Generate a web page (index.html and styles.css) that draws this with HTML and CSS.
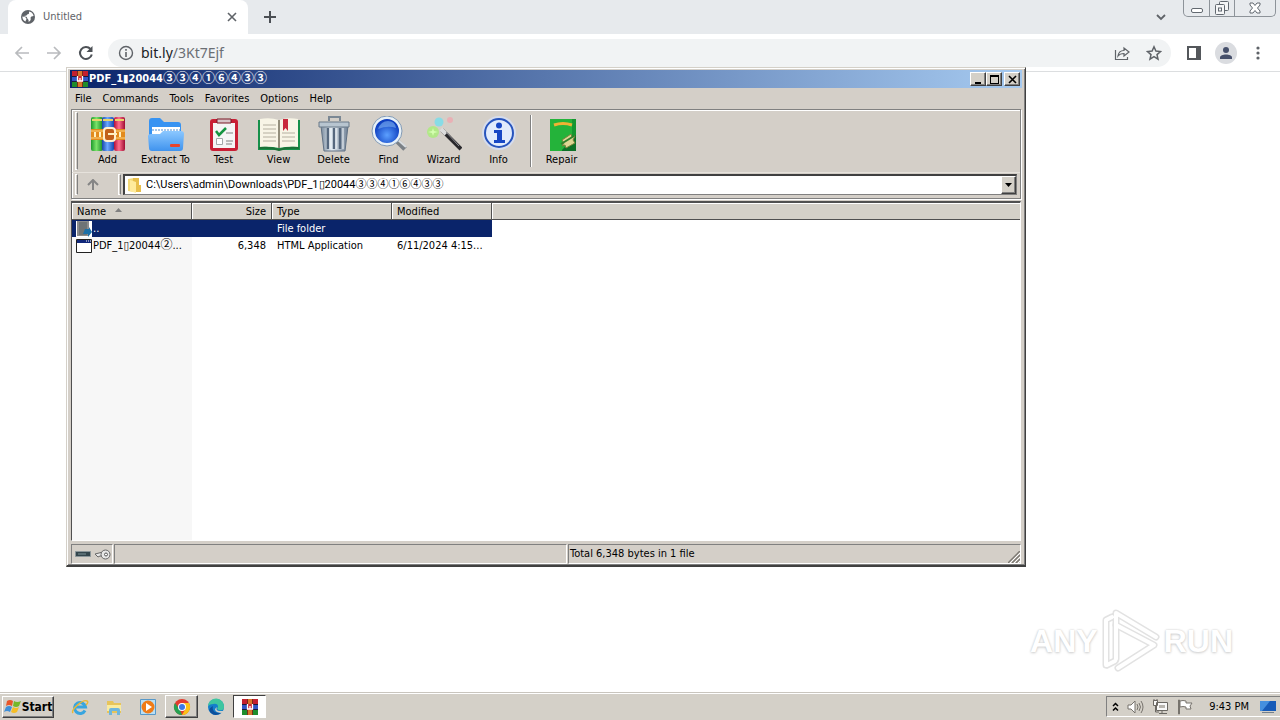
FILE: index.html
```html
<!DOCTYPE html>
<html lang="en">
<head>
<meta charset="utf-8">
<title>Untitled</title>
<link rel="stylesheet" href="styles.css">
</head>
<body>
<svg class="defs" aria-hidden="true">
  <defs>
    <linearGradient id="gGreen" x2="1"><stop offset="0" stop-color="#1d9a2b"/><stop offset=".45" stop-color="#7be36a"/><stop offset="1" stop-color="#118a24"/></linearGradient>
    <linearGradient id="gBlue" x2="1"><stop offset="0" stop-color="#1746a8"/><stop offset=".45" stop-color="#6ba8ff"/><stop offset="1" stop-color="#1746b0"/></linearGradient>
    <linearGradient id="gRed" x2="1"><stop offset="0" stop-color="#b5103a"/><stop offset=".45" stop-color="#ff6f8d"/><stop offset="1" stop-color="#a00d33"/></linearGradient>
    <linearGradient id="gFold" x2="0" y2="1"><stop offset="0" stop-color="#8cc8ff"/><stop offset="1" stop-color="#3f93ee"/></linearGradient>
    <linearGradient id="gSteel" x2="1"><stop offset="0" stop-color="#7b8c9e"/><stop offset=".4" stop-color="#e6eef5"/><stop offset="1" stop-color="#708195"/></linearGradient>
    <radialGradient id="gLens" cx=".5" cy=".65"><stop offset="0" stop-color="#5ca0ff"/><stop offset="1" stop-color="#0e3fc0"/></radialGradient>
    <symbol id="rar" viewBox="0 0 16 16">
      <path fill="#c3202f" d="M0 0h16v5H0z"/><path fill="#3156c4" d="M0 5.500h16v5H0z"/><path fill="#1f8c2c" d="M0 11h16v5H0z"/>
      <path stroke="#1a1a3a" d="M0 5.500h16M0 10.500h16"/><path fill="#d9762b" d="M5 0h6v16H5z"/>
      <path fill="#7a2b18" d="M5 0h1v16H5zm5 0h1v16h-1z"/><path fill="#d02a35" d="M5 5h6v6H5z"/><path stroke="#fff" stroke-width="1.300" fill="none" d="M5.500 5v5h5V5M8 7v3"/>
    </symbol>
  </defs>
</svg>

<div class="desktop">
  <header class="browser">
    <div class="tabstrip">
      <div class="tab">
        <svg width="16" height="16" viewBox="0 0 16 16"><circle cx="8" cy="8" r="7" fill="#5f6368"/><path fill="#fff" d="M2.400 7.500c2 .2 3.600.8 4 2 .4 1.100-.7 1.500-.8 3C3.500 11.600 2.200 9.800 2.400 7.500zM9 2.400c2.200.2 4.200 2 4.600 4.400-.9.900-1.900.2-2.700 1.300-.9 1.100.5 2-.6 3.500-.4.600-1 1-1.800 1.500.4-1.300 0-2.200-.8-3-1-1-.2-1.800-1.300-2.300-1-.4-1.600.2-2.200-.8 1-.4 2.300.1 2.600-.9.300-1.200 1.700-.6 2.200-1.600z"/></svg>
        <span>Untitled</span>
        <button class="plain" aria-label="Close tab"><svg width="10" height="10" viewBox="0 0 10 10"><path d="M1 1l8 8M9 1L1 9" stroke="#5f6368" stroke-width="1.600"/></svg></button>
      </div>
      <button class="plain newtab" aria-label="New tab"><svg width="12" height="12" viewBox="0 0 12 12"><path d="M6 0v12M0 6h12" stroke="#4b4f54" stroke-width="2"/></svg></button>
      <button class="plain tabsearch" aria-label="Search tabs"><svg width="10" height="7" viewBox="0 0 10 7"><path d="M1 1l4 4 4-4" stroke="#5f6368" stroke-width="1.800" fill="none"/></svg></button>
      <div class="caption">
        <button aria-label="Minimize"><svg width="14" height="14" viewBox="0 0 14 14"><rect x="1.500" y="7.500" width="11" height="4" rx="1.500" fill="#fff" stroke="#626970"/></svg></button>
        <button aria-label="Restore"><svg width="14" height="14" viewBox="0 0 14 14" fill="#f5f6f7" stroke="#626970"><rect x="4.500" y=".5" width="9" height="9" rx="1"/><rect x=".5" y="3.500" width="9" height="10" rx="1"/><rect x="3.500" y="7" width="3" height="3"/></svg></button>
        <button class="wide" aria-label="Close"><svg width="12" height="12" viewBox="0 0 12 12"><path d="M1 1h3l2 2.500L8 1h3v2L8.500 6 11 9v2H8L6 8.500 4 11H1V9l2.500-3L1 3z" fill="#fff" stroke="#626970"/></svg></button>
      </div>
    </div>
    <div class="navbar">
      <button class="plain" aria-label="Back"><svg width="16" height="14" viewBox="0 0 16 14"><path d="M15 7H2M8 1L2 7l6 6" stroke="#b9bbbe" stroke-width="1.700" fill="none"/></svg></button>
      <button class="plain" aria-label="Forward"><svg width="16" height="14" viewBox="0 0 16 14"><path d="M1 7h13M8 1l6 6-6 6" stroke="#b9bbbe" stroke-width="1.700" fill="none"/></svg></button>
      <button class="plain" aria-label="Reload"><svg width="16" height="16" viewBox="0 0 16 16"><path d="M13.800 9.500A6 6 0 1 1 12.500 4" stroke="#4d5156" stroke-width="2" fill="none"/><path d="M14.500 1v6h-6z" fill="#4d5156"/></svg></button>
      <div class="omnibox">
        <svg width="16" height="16" viewBox="0 0 16 16"><circle cx="8" cy="8" r="6.500" fill="none" stroke="#5f6368" stroke-width="1.400"/><path d="M8 7v5M8 4v1.700" stroke="#5f6368" stroke-width="1.600"/></svg>
        <a class="url" href="#">bit.ly<span>/3Kt7Ejf</span></a>
        <button class="plain" aria-label="Share"><svg width="16" height="16" viewBox="0 0 16 16" fill="none" stroke="#5f6368" stroke-width="1.200"><path d="M1.500 5v9.500h12V12"/><path d="M4 11c.5-4 3-5.500 6-5.500V3l5 4-5 4V8.500C7.500 8.500 5.500 9 4 11z"/></svg></button>
        <button class="plain" aria-label="Bookmark"><svg width="16" height="16" viewBox="0 0 16 16"><path d="M8 1.800l1.900 4.300 4.600.4-3.500 3.100 1 4.500-4-2.400-4 2.400 1-4.500L1.500 6.500l4.600-.4z" fill="none" stroke="#5f6368" stroke-width="1.500"/></svg></button>
      </div>
      <button class="plain" aria-label="Side panel"><svg width="14" height="14" viewBox="0 0 14 14"><path d="M0 0h14v14H0zM2 2v10h7V2z" fill="#54575b" fill-rule="evenodd"/></svg></button>
      <button class="plain profile" aria-label="Profile"><svg width="22" height="22" viewBox="0 0 22 22"><circle cx="11" cy="11" r="11" fill="#dadce0"/><circle cx="11" cy="8" r="3" fill="#46506b"/><path d="M5 17v-1.500c0-4 12-4 12 0V17z" fill="#46506b"/></svg></button>
      <button class="plain" aria-label="Menu"><svg width="4" height="14" viewBox="0 0 4 14" fill="#5f6368"><circle cx="2" cy="2" r="1.600"/><circle cx="2" cy="7" r="1.600"/><circle cx="2" cy="12" r="1.600"/></svg></button>
    </div>
  </header>

  <main class="page">
    <div class="watermark">
      <span>ANY</span>
      <svg width="58" height="66" viewBox="0 0 58 66" fill="none" stroke-linejoin="round" stroke-linecap="round"><g stroke="#e2e2e2" stroke-width="7"><path d="M4 57V12l6-3M14 51V5l40 24"/><path d="M14 17l38 20-36 23M5 57l8-4"/></g><g stroke="#fff" stroke-width="4"><path d="M4 57V12l6-3M14 51V5l40 24"/><path d="M14 17l38 20-36 23M5 57l8-4"/></g></svg>
      <span>RUN</span>
    </div>
  </main>

  <section class="window" aria-label="WinRAR">
    <div class="titlebar">
      <svg width="16" height="16"><use href="#rar"/></svg>
      <h1>PDF_1▮20044<span class="circled">③③④①⑥④③③</span></h1>
      <button class="btn3d" aria-label="Minimize"><svg width="9" height="9"><path d="M1 7h6v2H1z"/></svg></button>
      <button class="btn3d" aria-label="Maximize"><svg width="9" height="9"><path fill-rule="evenodd" d="M0 0h9v9H0zM1 2v6h7V2z"/></svg></button>
      <button class="btn3d close" aria-label="Close"><svg width="9" height="9" viewBox="0 0 9 9"><path d="M1 1l7 7M8 1L1 8" stroke="#000" stroke-width="1.600"/></svg></button>
    </div>
    <nav class="menu">
      <button>File</button><button>Commands</button><button>Tools</button><button>Favorites</button><button>Options</button><button>Help</button>
    </nav>
    <div class="bars">
      <div class="tools">
        <i class="grip"></i>
        <button><svg width="36" height="36" viewBox="0 0 36 36"><rect x="1" y="1" width="12" height="34" rx="2" fill="url(#gGreen)"/><rect x="12" y="1" width="12" height="34" rx="2" fill="url(#gBlue)"/><rect x="24" y="1" width="11" height="34" rx="2" fill="url(#gRed)"/><path d="M2 4h10M13 4h10M25 4h9" stroke="#e9d36b" stroke-width="2"/><path d="M1 13h34v11H1z" fill="#e28a1c"/><path d="M1 15h34M1 22h34" stroke="#ffd27a"/><rect x="14" y="12" width="11" height="13" rx="3" fill="#c2601a" stroke="#fff0d0" stroke-width="2"/><path d="M18 18h9M5 16v5M10 16v5M30 16v5" stroke="#fff0c0" stroke-width="2"/></svg>Add</button>
        <button class="broad"><svg width="36" height="36" viewBox="0 0 36 36"><path d="M1 5q0-3 3-3h8l4 4h14q3 0 3 3v16H1z" fill="#3793f2"/><path d="M4 11h28v10H4z" fill="#fff"/><path d="M4 14h28" stroke="#a4c6ea" stroke-width="2" stroke-dasharray="2 1"/><path d="M0 20q0-2 3-2h9l3-3h18q3 0 3 3l-1 14q0 3-3 3H4q-3 0-3-3z" fill="url(#gFold)"/><rect x="22" y="28" width="10" height="3" rx="1" fill="#e8442c"/></svg>Extract To</button>
        <button><svg width="36" height="36" viewBox="0 0 36 36"><rect x="4" y="3" width="28" height="32" rx="3" fill="#c91f35"/><path d="M7 7h22v25H7z" fill="#f5f5f5"/><path d="M11 3h14v4H11z" fill="#d8c4c8" stroke="#7a1724"/><path d="M10 15l3 4 7-7" stroke="#159441" stroke-width="2.500" fill="none"/><path d="M20 17h7M20 25h7M20 28h6" stroke="#bbb" stroke-width="2"/><path d="M10.500 22.500h6v6h-6z" fill="#fff" stroke="#a2a8aa"/></svg>Test</button>
        <button><svg width="42" height="36" viewBox="0 0 42 36"><path d="M0 4h42v30H0z" fill="#16904a"/><path d="M2 3q10-2 19 1 9-3 19-1v28q-10-1-19 1-9-2-19-1z" fill="#f8f5e6"/><path d="M21 4v28" stroke="#938e7b" stroke-width="2"/><path d="M5 9h13M5 13h13M5 17h13M5 21h13M5 25h13M24 17h13M24 21h13M24 25h13" stroke="#b5b0a0"/><path d="M25 3h5v12l-2.500-3-2.500 3z" fill="#c8293c"/><path d="M1 32q12-1 20 2 8-3 20-2" stroke="#1b7137" stroke-width="2" fill="none"/></svg>View</button>
        <button><svg width="36" height="36" viewBox="0 0 36 36"><path d="M5 10h27l-3 25H8z" fill="url(#gSteel)" stroke="#607184"/><path d="M12 12v21M18 12v21M24 12v21" stroke="#56687e" stroke-width="2.500"/><path d="M14 12v21M20 12v21M27 12v21" stroke="#f3f7fa"/><path d="M3 6h30v5H3z" fill="#b8c5d0" stroke="#697988"/><path d="M13 5V1h11v4" fill="none" stroke="#7b8894" stroke-width="2"/></svg>Delete</button>
        <button><svg width="36" height="36" viewBox="0 0 36 36"><path d="M25 24l9 9" stroke="#7a8086" stroke-width="5"/><path d="M26 23l9 8" stroke="#d8dcdf" stroke-width="2"/><circle cx="16" cy="15" r="13.500" fill="url(#gLens)" stroke="#e8f1f8" stroke-width="3"/><circle cx="16" cy="15" r="15" fill="none" stroke="#829ab5"/><path d="M7 13q3-8 10-8t8 7q-8-3-18 1z" fill="#6fa2ec" opacity=".7"/></svg>Find</button>
        <button><svg width="36" height="36" viewBox="0 0 36 36"><circle cx="7" cy="16" r="6" fill="#a9ee78" opacity=".8"/><circle cx="13" cy="6" r="4.500" fill="#74dfee" opacity=".8"/><circle cx="24" cy="4" r="3" fill="#f2a3ac" opacity=".7"/><path d="M7 12l1 3 4 1-4 1-1 3-1-3-4-1 4-1z" fill="#d5ffb0"/><path d="M16 14l19 19" stroke="#29282c" stroke-width="4"/><path d="M15 13l5 5" stroke="#dcdcdc" stroke-width="4"/><path d="M20 16l13 14" stroke="#909096"/></svg>Wizard</button>
        <button><svg width="36" height="36" viewBox="0 0 36 36"><circle cx="18" cy="17" r="17" fill="#d5dced"/><circle cx="18" cy="17" r="14" fill="#e1ebfc" stroke="#2754bd" stroke-width="2"/><circle cx="18" cy="9.500" r="3" fill="#1747c5"/><path d="M13 14h8v10h3v3H13v-3h3v-7h-3z" fill="#1747c5"/></svg>Info</button>
        <i class="sep"></i>
        <button><svg width="36" height="36" viewBox="0 0 36 36"><path d="M6 3h26v32H6z" fill="#159630"/><path d="M6 3h22v32H6z" fill="#24b33a"/><path d="M10 9q9-3 18 0" stroke="#f0b233" stroke-width="3" fill="none"/><path d="M18 34l14-15v16H18z" fill="#0d7228"/><path d="M18 24l9-6 1 3 3-1-2 4 2 3-9 5-1-3-3 1 2-3z" fill="#dfd694" stroke="#77843a"/><path d="M17 28l13-8" stroke="#31802c" stroke-width="2"/></svg>Repair</button>
      </div>
      <div class="address">
        <i class="grip"></i>
        <button class="plain up" aria-label="Up one level"><svg width="12" height="11" viewBox="0 0 12 11"><path d="M6 11V2M1 6l5-5 5 5" stroke="#858585" stroke-width="2" fill="none"/></svg></button>
        <i class="grip"></i>
        <div class="combo">
          <svg width="16" height="16" viewBox="0 0 16 16"><path d="M2 2l6-1v14l-6-1z" fill="#f4da79"/><path d="M7 1h6v7h2v7H7z" fill="#e8bf4c"/><path d="M4 3l6 2v11l-6-2z" fill="#ffeb9c"/></svg>
          <input type="text" aria-label="Path" value="C:\Users\admin\Downloads\PDF_1▯20044③③④①⑥④③③">
          <button class="btn3d" aria-label="Show history"><svg width="7" height="4"><path d="M0 0h7L3.500 4z"/></svg></button>
        </div>
      </div>
    </div>
    <div class="list">
      <table>
        <colgroup><col class="c-name"><col class="c-size"><col class="c-type"><col class="c-mod"><col></colgroup>
        <thead><tr><th>Name <svg class="sort" width="7" height="4"><path d="M0 4L3.500 0 7 4z" fill="#808080"/></svg></th><th class="num">Size</th><th>Type</th><th>Modified</th><th class="rest"></th></tr></thead>
        <tbody>
          <tr class="selected"><td><div class="file"><svg width="16" height="16" viewBox="0 0 16 16"><path d="M0 0h16v16H0z" fill="#fff"/><path d="M1 0h12v15H1z" fill="#8b8c8c"/><path d="M3 1h8v13H3z" fill="#6e7476"/><path d="M9 8h4V6l3 5-4 5v-3H7z" fill="#1b70a8"/></svg><span>..</span></div></td><td></td><td>File folder</td><td></td><td class="rest"></td></tr>
          <tr><td><div class="file"><svg width="16" height="14" viewBox="0 0 16 14"><path d="M.5.500h15v13H.5z" fill="#fff" stroke="#222"/><path d="M1 1h14v3H1z" fill="#11277a"/><path d="M10 2h1M12 2h1M14 2h1" stroke="#fff"/></svg><span>PDF_1▯20044<span class="circled">②</span>...</span></div></td><td class="num">6,348</td><td>HTML Application</td><td>6/11/2024 4:15...</td><td class="rest"></td></tr>
        </tbody>
      </table>
    </div>
    <footer class="status">
      <div class="pane icons"><svg width="16" height="8" viewBox="0 0 16 8"><path d="M.5 1.500h15v5H.5z" fill="#34464d" stroke="#8b969a"/><path d="M3 4h8" stroke="#7c9298"/></svg><svg width="17" height="11" viewBox="0 0 17 11"><path d="M1 5l8-2v4H6L4 8z" fill="#e7e7e7" stroke="#666"/><circle cx="11.500" cy="5.500" r="4.500" fill="#e7e7e7" stroke="#666"/><circle cx="12" cy="5.500" r="1.500" fill="#fff" stroke="#555"/></svg></div>
      <div class="pane"></div>
      <div class="pane">Total 6,348 bytes in 1 file<svg class="resize" width="12" height="12" viewBox="0 0 12 12"><path d="M0 12L12 0M4 12l8-8M8 12l4-4" stroke="#7d7973" stroke-width="1.500"/><path d="M2 12L12 2M6 12l6-6M10 12l2-2" stroke="#fff"/></svg></div>
    </footer>
  </section>

  <footer class="taskbar">
    <button class="btn3d start"><svg width="18" height="18" viewBox="0 0 18 18"><path d="M3 3q3-2 6 0L8 8Q5 6 2 8z" fill="#e8562a"/><path d="M10 3q3 2 7 0l-2 5q-3 2-6 0z" fill="#75b82a"/><path d="M2 9q3-2 6 0l-2 5q-3-2-6 0z" fill="#3f8fd8"/><path d="M9 9q3 2 6 0l-2 5q-3 2-6 0z" fill="#f6be26"/></svg>Start</button>
    <div class="apps">
      <button class="plain" aria-label="Internet Explorer"><svg width="18" height="18" viewBox="0 0 18 18" fill="none"><path d="M14 12.500A5.500 5.500 0 1 1 14.500 9H5" stroke="#38a5df" stroke-width="3"/><path d="M2 15C-1 12 12 1 16 3q2 1-1 4" stroke="#e9b836" stroke-width="1.400"/></svg></button>
      <button class="plain" aria-label="Explorer"><svg width="18" height="18" viewBox="0 0 18 18"><path d="M2 3h6l1 2h7v10H2z" fill="#e7c45a"/><path d="M2 7h14v6H2z" fill="#faeb9e"/><path d="M4 17v-5q0-2 2-2h7q2 0 2 2v5h-3v-4H7v4z" fill="#6fb6dd"/></svg></button>
      <button class="plain" aria-label="Media Player"><svg width="18" height="18" viewBox="0 0 18 18"><path d="M1.500 1.500h15v15h-15z" fill="#b9dff5" stroke="#5798c8"/><circle cx="9" cy="9" r="6.500" fill="#f07c18"/><path d="M7 5l6 4-6 4z" fill="#fff"/></svg></button>
      <button class="btn3d task" aria-label="Chrome"><svg width="18" height="18" viewBox="0 0 18 18"><circle cx="9" cy="9" r="8" fill="#e33b2e"/><path d="M2 5l5 7 2 5A8 8 0 0 1 2 5z" fill="#26a152"/><path d="M9 5h7a8 8 0 0 1-7 12l4-7z" fill="#fbc116"/><circle cx="9" cy="9" r="4" fill="#fff"/><circle cx="9" cy="9" r="3" fill="#3b78e7"/></svg></button>
      <button class="plain" aria-label="Edge"><svg width="18" height="18" viewBox="0 0 18 18"><circle cx="9" cy="9" r="8" fill="#157fcb"/><path d="M1 8a8 8 0 0 1 16 1q0 4-5 3-3-1-1-3 0-4-5-3-3 0-5 2z" fill="#3ec6a0"/><path d="M6 8q-2 7 8 7-6 4-10 0T6 8z" fill="#0c4f9c"/><path d="M10 9q-2 4 3 4h4l-1 2q-8 0-8-4z" fill="#d4d0c8"/></svg></button>
      <button class="btn3d task active" aria-label="WinRAR"><svg width="16" height="16"><use href="#rar"/></svg></button>
    </div>
    <div class="tray">
      <svg width="7" height="10" viewBox="0 0 7 10" fill="none" stroke="#000" stroke-width="1.500"><path d="M1 4l2.500-2.500L6 4M1 8.500L3.500 6 6 8.500"/></svg>
      <svg width="17" height="14" viewBox="0 0 17 14" fill="none" stroke="#77736d"><path d="M1 5h3l4-4v12L4 9H1z" fill="#fff"/><path d="M10 4q2 3 0 6M12 3q3 4 0 8M14 1q4 6 0 12"/></svg>
      <svg width="17" height="16" viewBox="0 0 17 16" stroke="#6a6762" fill="#f8f8f8"><path d="M4.500 3.500h11v8h-11zM7 14.500h8M10 12v2M1.500 1.500h4v5h-4z"/><path d="M7 6h6v3H7z" fill="#b8b5af" stroke="none"/><path d="M3.500 7v6H7M2 0v2M5 0v2" fill="none"/></svg>
      <svg width="16" height="16" viewBox="0 0 16 16" stroke="#77736d" fill="#fff"><path d="M2.500 1v14h-1V1zM3 2q3-1 6 0v2h6l-2 3 1 3H9V8Q6 7 3 8z"/></svg>
      <time>9:43 PM</time>
      <svg width="16" height="14" viewBox="0 0 16 14"><path d="M0 1h16v10H0z" fill="#175bb8"/><path d="M0 1h10L2 11H0z" fill="#4590df"/><path d="M2 12h12v1H2z" fill="#73808d"/></svg>
    </div>
  </footer>
</div>
</body>
</html>
```
FILE: styles.css
```css
* { box-sizing: border-box; }
body { margin: 0; font: 11px/14px "DejaVu Sans Condensed", "DejaVu Sans", sans-serif; color: #000; }
button, input { font: inherit; color: inherit; margin: 0; }
button { padding: 0; border: 0; background: none; }
svg { display: block; flex: none; }
.defs { position: absolute; width: 0; height: 0; }
.plain { display: flex; align-items: center; justify-content: center; }
.circled { font-family: "Noto Sans CJK SC", sans-serif; font-size: 12px; line-height: 12px; }

.desktop { position: relative; display: flex; flex-direction: column; min-height: 100vh; background: #fff; overflow: hidden; }

/* browser chrome */
.browser { border-bottom: 1px solid #dcdee0; }
.tabstrip { display: flex; align-items: center; height: 34px; padding-left: 8px; background: #e7eaed; }
.tab { display: flex; align-items: center; gap: 7px; width: 240px; height: 34px; padding: 0 11px 0 12px; border-radius: 8px 8px 0 0; background: #fff; color: #5f6368; }
.tab span { flex: 1; }
.newtab { width: 44px; height: 34px; }
.tabsearch { width: 30px; height: 34px; margin-left: auto; margin-right: 7px; }
.caption { display: flex; align-self: flex-start; height: 17px; margin-right: 4px; border: 1px solid #8d9399; border-top: 0; border-radius: 0 0 5px 5px; }
.caption button { display: flex; align-items: center; justify-content: center; width: 25px; }
.caption button + button { border-left: 1px solid #8d9399; }
.caption .wide { width: 41px; }
.navbar { display: flex; align-items: center; height: 37px; padding: 0 20px 0 14px; gap: 16px; }
.omnibox { display: flex; align-items: center; flex: 1; height: 28px; gap: 16px; padding: 0 9px 0 10px; margin-left: -2px; border-radius: 14px; background: #f1f3f4; }
.url { flex: 1; margin-left: -9px; font: 14px/20px "Noto Sans", sans-serif; color: #202124; text-decoration: none; }
.url span { color: #6b6f74; }
.profile { margin: 0 3px 0 -2px; }

.page { display: flex; flex: 1; align-items: flex-end; justify-content: flex-end; padding: 0 47px 18px 0; }
.watermark { display: flex; align-items: center; gap: 4px; font: 700 32px/66px "Liberation Sans", sans-serif; color: #fff; text-shadow: 0 0 2px #c8c8c8, 0 1px 3px #d4d4d4; }

/* archive window */
.window { position: absolute; left: 66px; top: 67px; display: flex; flex-direction: column; width: 960px; height: 500px; padding: 2px 3px 1px 3px; border: 1px solid #d4d0c8; border-right-color: #404040; border-bottom: 2px solid #404040; background: #d4cfc8; box-shadow: inset 1px 1px #fff, inset -1px -1px #808080; }
.titlebar { display: flex; align-items: center; height: 18px; padding: 0 2px; background: linear-gradient(90deg, #0a246a, #a6caf0); color: #fff; }
.titlebar h1 { flex: 1; margin: 0 0 0 1px; font-size: 11px; line-height: 18px; font-weight: 700; }
.titlebar .circled { font-size: 13px; }
.btn3d { display: flex; align-items: center; justify-content: center; border: 1px solid #fff; border-right-color: #404040; border-bottom-color: #404040; background: #d4d0c8; box-shadow: inset -1px -1px #808080; }
.titlebar .btn3d { width: 16px; height: 14px; }
.titlebar .close { margin-left: 2px; }
.menu { display: flex; height: 21px; gap: 11px; padding-left: 5px; align-items: center; }
.bars { margin: 0 1px; border: 1px solid #808080; box-shadow: inset 1px 1px #fff, 1px 1px #fff; }
.tools { display: flex; align-items: center; height: 62px; padding: 2px 3px; }
.grip { width: 3px; align-self: stretch; margin-right: 2px; border: 1px solid #fff; border-right-color: #808080; }
.tools button { display: flex; flex-direction: column; align-items: center; width: 55px; gap: 1px; }
.tools .broad { width: 61px; }
.sep { width: 2px; height: 52px; margin: 0 2px 0 4px; border-left: 1px solid #808080; border-right: 1px solid #fff; }
.address { display: flex; align-items: stretch; height: 26px; padding: 1px 3px 3px 3px; border-top: 1px solid #e6e2dc; }
.up { width: 26px; margin-right: 12px; }
.combo { display: flex; flex: 1; align-items: center; padding-left: 1px; border: 1px solid #808080; border-top: 2px solid #404040; border-left: 2px solid #404040; background: #fff; }
.combo input { flex: 1; min-width: 0; padding: 0 0 0 4px; border: 0; background: none; outline: 0; font: 11px/14px Roboto, "Noto Sans CJK SC", sans-serif; }
.combo .btn3d { width: 15px; align-self: stretch; }
.list { flex: 1; margin: 2px 1px 0 1px; border: 1px solid #fff; border-top: 2px solid #505050; border-left: 1px solid #505050; background: linear-gradient(#f7f7f7, #f7f7f7) 0 0 / 120px 100% no-repeat #fff; }
table { width: 100%; border-collapse: separate; border-spacing: 0; table-layout: fixed; }
.c-name, .c-type { width: 120px; }
.c-size { width: 80px; }
.c-mod { width: 100px; }
th { height: 17px; padding: 1px 5px 0 5px; border-bottom: 1px solid #505050; border-right: 1px solid #505050; background: #d4d0c8; box-shadow: inset 1px 1px #fff; font-weight: 400; text-align: left; white-space: nowrap; }
th.rest { border-right: 0; }
.sort { display: inline-block; margin: 0 0 3px 6px; }
td { height: 17px; padding: 0 5px; white-space: nowrap; }
td:first-child { padding: 0 0 0 4px; }
th.num, td.num { text-align: right; }
td.num { padding-right: 6px; }
.selected td { background: #0a246a; color: #fff; }
.selected .rest { background: #fff; }
.file { display: flex; align-items: center; gap: 1px; }
.status { display: grid; grid-template-columns: 42px 1fr 1fr; gap: 1px; height: 19px; margin: 3px 1px 1px 1px; }
.pane { position: relative; border: 1px solid #808080; border-right-color: #fff; border-bottom-color: #fff; padding: 0 1px; line-height: 18px; }
.icons { display: flex; align-items: center; gap: 3px; padding-left: 3px; }
.resize { position: absolute; right: 0; bottom: 0; }

/* taskbar */
.taskbar { display: flex; align-items: center; height: 28px; padding-left: 2px; border-top: 1px solid #c9c5be; background: #d4d0c8; box-shadow: inset 0 1px #fff; }
.start { width: 52px; height: 22px; font-size: 12px; font-weight: 700; }
.apps { display: flex; flex: 1; align-items: center; padding-left: 9px; gap: 1px; }
.apps button { width: 33px; height: 23px; }
.apps .active { border-color: #404040 #fff #fff #404040; background: #fff; box-shadow: none; }
.tray { display: flex; align-items: center; gap: 8px; height: 21px; padding: 0 4px 0 5px; border: 1px solid #808080; border-right: 0; border-bottom-color: #fff; }
.tray time { margin: 0 3px 0 8px; }
```
